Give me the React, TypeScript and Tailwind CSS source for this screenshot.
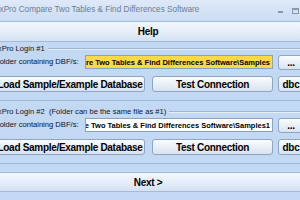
const btn =
  "flex shrink-0 items-center justify-center rounded-[3px] border border-[#8ea5c3] bg-linear-to-b from-[#fbfcfe] to-[#d8e3f1] text-[10px] font-bold tracking-[-0.3px] text-black whitespace-nowrap";

const bar =
  "flex items-center justify-center border-y border-[#a3bad8] bg-linear-to-b from-[#f3f7fd] via-[#e6eef9] to-[#d3e1f3] pr-[4px] text-[10px] font-bold tracking-[-0.3px] text-black";

function GroupHeader({ label }: { label: string }) {
  return (
    <div className="flex h-[13px] items-center pl-[7px]">
      <span className="whitespace-pre text-[7.6px] leading-none text-[#0f1724]">{label}</span>
      <div className="ml-[3px] h-px flex-1 bg-[#9fb6d6] shadow-[0_1px_0_#e6eefa]" />
    </div>
  );
}

function FolderRow({ path, yellow }: { path: string; yellow?: boolean }) {
  return (
    <div className="flex h-[14px] items-center">
      <span className="w-[90px] shrink-0 whitespace-nowrap text-[7.6px] leading-none text-[#0c121c]">
        Folder containing DBF/s:
      </span>
      <div
        className={
          yellow
            ? "flex h-[14px] w-[188px] shrink-0 items-center border border-[#8ca3c0] bg-[#fdd947] pr-[2px]"
            : "flex h-[14px] w-[188px] shrink-0 items-center border border-[#8ca3c0] bg-white pr-[2px]"
        }
      >
        <span className="block w-full overflow-hidden whitespace-nowrap text-[7.5px] font-bold leading-[9px] [direction:rtl]">
          {path}
        </span>
      </div>
      <button className={`${btn} ml-[5px] h-[15px] w-[26px]`}>...</button>
    </div>
  );
}

function ButtonRow() {
  return (
    <div className="mt-[7px] flex">
      <button className={`${btn} h-[16px] w-[150px]`}>Load Sample/Example Database</button>
      <button className={`${btn} ml-[7px] h-[16px] w-[121px]`}>Test Connection</button>
      <button className={`${btn} ml-[5px] h-[16px] w-[26px]`}>dbc</button>
    </div>
  );
}

export default function App() {
  return (
    <div className="h-[200px] w-[300px] overflow-hidden bg-[#c3d8f3] font-['Liberation_Sans',Arial,sans-serif]">
      <div className="ml-[-24px] w-[348px]">
        {/* title bar */}
        <div className="flex h-[21px] items-center bg-linear-to-b from-[#dfe9f8] to-[#cbdcf2] pl-[14px]">
          <span className="whitespace-nowrap text-[8.2px] leading-none text-[#6e7e94]">
            FoxPro Compare Two Tables &amp; Find Differences Software
          </span>
          <div className="ml-auto mr-[25px] flex items-center">
            <div className="mt-[3px] h-[2px] w-[5px] bg-[#8a98ad]" />
            <div className="ml-[9px] h-[6px] w-[7px] border border-t-2 border-[#8a98ad]" />
          </div>
        </div>

        {/* menu */}
        <div className={`${bar} h-[21px]`}>Help</div>

        {/* login 1 */}
        <div className="ml-[5px] border-b border-l border-[#9fb6d6] pb-[8px]">
          <GroupHeader label="FoxPro Login #1" />
          <div className="pl-[13px]">
            <FolderRow yellow path="C:\Program Files\FoxPro Compare Two Tables & Find Differences Software\Samples" />
            <ButtonRow />
          </div>
        </div>

        {/* login 2 */}
        <div className="ml-[5px] mt-[4px] border-b border-l border-[#9fb6d6] pb-[8px]">
          <GroupHeader label="FoxPro Login #2  (Folder can be the same file as #1)" />
          <div className="pl-[13px]">
            <FolderRow path="C:\Program Files\FoxPro Compare Two Tables & Find Differences Software\Samples1" />
            <ButtonRow />
          </div>
        </div>

        <div className={`${bar} mt-[8px] h-[20px]`}>Next &gt;</div>
      </div>
    </div>
  );
}
